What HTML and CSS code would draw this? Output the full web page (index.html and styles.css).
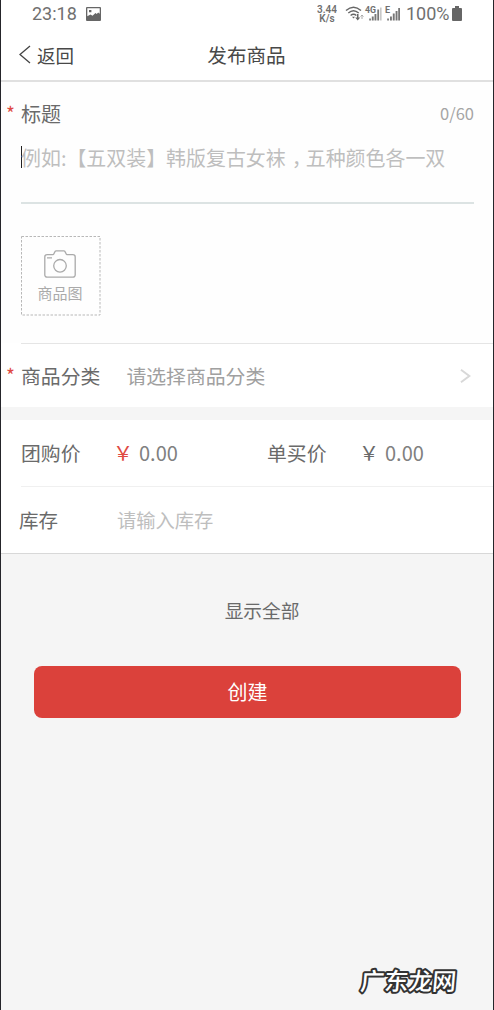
FILE: index.html
```html
<!DOCTYPE html>
<html lang="zh-CN">
<head>
<meta charset="utf-8">
<title>发布商品</title>
<link rel="stylesheet" href="styles.css">
</head>
<body>
<div class="phone">
  <div class="status">
    <span class="clock">23:18</span>
    <svg class="photo" width="15" height="14" viewBox="0 0 15 14"><path fill="#666" fill-rule="evenodd" d="M1 0h13a1 1 0 0 1 1 1v12a1 1 0 0 1-1 1H1a1 1 0 0 1-1-1V1a1 1 0 0 1 1-1zM1.300 1.300v8L4.500 7.500l2 1.200 3-2.700 1.200 1 1.500-1.500 1.500 1.200V1.300zM3 3h2.400v2.300H3z"/></svg>
    <span class="speed"><b>3.44</b><b>K/s</b></span>
    <svg class="wifi" width="20" height="16" viewBox="0 0 20 16" fill="none" stroke="#666" stroke-width="1.400"><path d="M1 4.600Q8.500-2.300 16 4.600M3.300 7.100Q8.500 2.400 13.700 7.100M5.600 9.500Q8.500 7 11.400 9.500"/><path fill="#666" stroke="none" d="M7 10.800h3l-1.500 1.700zM12 8h1.500v3.500h1.700l-2.500 3-2.500-3H12z"/><path stroke="#aaa" stroke-width="1" d="M17 13V9M15.500 10.500L17 9l1.500 1.500"/></svg>
    <svg class="signal" width="17" height="16" viewBox="0 0 17 16"><text class="net" x="-1" y="7" textLength="11" lengthAdjust="spacingAndGlyphs">4G</text><path fill="#777" d="M3.200 12.500h1.700v2H3.200zM5.800 10.500h1.900v4H5.800zM8.500 8h1.900v6.500H8.500zM11.300 3.500h1.800v11h-1.800z"/><path fill="#bbb" d="M14.200 1.500h1.300v13h-1.300z"/></svg>
    <svg class="signal signal-e" width="16" height="16" viewBox="0 0 16 16"><text class="net" x="-1" y="7">E</text><path fill="#777" d="M1.200 12.500h1.700v2H1.200zM4 10.500h1.900v4H4zM6.800 7.500h1.900v7H6.800zM9.600 5h1.900v9.500H9.600zM12.200 2h1.800v12.500h-1.800z"/></svg>
    <span class="percent">100%</span>
    <svg class="battery" width="10" height="16" viewBox="0 0 10 16"><path fill="#666" d="M3 0h4v2h2a1 1 0 0 1 1 1v11a1 1 0 0 1-1 1H1a1 1 0 0 1-1-1V3a1 1 0 0 1 1-1h2z"/></svg>
  </div>
  <header class="nav">
    <div class="back"><svg width="12" height="19" viewBox="0 0 12 19" fill="none" stroke="#444" stroke-width="1.300"><path d="M11 1L1 9.500 11 18"/></svg><span>返回</span></div>
    <h1 class="title">发布商品</h1>
  </header>
  <section class="product">
    <div class="heading"><i class="star">*</i><span class="label">标题</span><span class="count">0/60</span></div>
    <div class="entry"><i class="caret"></i><span>例如:【五双装】韩版复古女袜<span class="comma">，</span>五种颜色各一双</span></div>
    <div class="upload">
      <svg class="frame" width="80" height="80"><rect x=".5" y=".5" width="78.500" height="78.500" fill="none" stroke="#b8b8b8" stroke-dasharray="2.500 1.500"/></svg>
      <svg class="camera" width="32" height="28" viewBox="0 0 32 28" fill="none" stroke="#aaa" stroke-width="1.300"><path d="M3 4.700h6c1.500 0 1.300-3.900 3-3.900h8c1.700 0 1.500 3.900 3 3.900h6a2.200 2.200 0 0 1 2.200 2.200v18a2.200 2.200 0 0 1-2.200 2.200H3a2.200 2.200 0 0 1-2.200-2.200v-18A2.200 2.200 0 0 1 3 4.700zM3 7.800h5"/><circle cx="16" cy="15.800" r="6.300"/></svg>
      <span>商品图</span>
    </div>
  </section>
  <section class="category">
    <i class="star">*</i><span class="label">商品分类</span><span class="choose">请选择商品分类</span>
    <svg width="11" height="14" viewBox="0 0 11 14" fill="none" stroke="#d8d8d8" stroke-width="2"><path d="M1 .8L9.300 7 1 13.200"/></svg>
  </section>
  <section class="prices">
    <div class="price"><span class="label">团购价</span><span class="yen red">￥</span><span class="amount">0.00</span></div>
    <div class="price"><span class="label">单买价</span><span class="yen">￥</span><span class="amount">0.00</span></div>
  </section>
  <section class="stock"><span class="stock-label">库存</span><span class="stock-hint">请输入库存</span></section>
  <div class="show-all">显示全部</div>
  <button class="create">创建</button>
  <svg class="brand" width="106" height="36" viewBox="0 0 106 36"><text x="7" y="26.500" transform="skewX(-5)">广东龙网</text></svg>
</div>
</body>
</html>
```
FILE: styles.css
```css
* { box-sizing: border-box; }
body { margin: 0; }
svg { display: block; flex: none; }
i { font-style: normal; }
.phone {
  width: 494px; height: 1010px; overflow: hidden;
  display: flex; flex-direction: column;
  border: solid #25252a; border-width: 0 1px;
  background: #f5f5f5; color: #6a6a6a;
  font: 20px/30px "Noto Sans CJK SC", sans-serif;
  white-space: nowrap;
}
.status {
  height: 28px; flex: none; display: flex; align-items: center;
  padding-left: 31px; background: #fff;
  font: 18px/28px Roboto, sans-serif; color: #707070;
}
.clock { width: 45px; }
.photo { margin-left: 9px; }
.speed {
  display: flex; flex-direction: column; align-items: center;
  width: 20px; margin-left: 216px; padding-bottom: 1px;
  font-size: 10px; line-height: 9px;
}
.speed b { height: 9px; overflow: hidden; font-weight: 600; }
.wifi { margin-left: 8px; }
.signal { margin: 0 0 0 1px; overflow: visible; }
.signal-e { margin-left: 3px; }
.net { font: 700 9px Roboto, sans-serif; fill: #707070; }
.percent { width: 44px; margin-left: 4px; }
.battery { margin-left: 2px; }
.nav {
  height: 54px; flex: none; display: grid; grid-template-columns: 1fr auto 1fr;
  align-items: center; padding: 1px 1px 0 18px;
  background: #fff; border-bottom: 2px solid #e0e0e0; color: #484848;
}
.back { display: flex; align-items: center; gap: 6px; font-size: 18.500px; }
.title { margin: 0 18px 0 0; font-size: 19.600px; font-weight: 400; }
.product { height: 261px; flex: none; padding: 17px 0 0 20px; background: #fefefe; }
.heading { display: flex; align-items: center; height: 30px; padding-right: 19px; }
.star { width: 14px; margin: -3px 0 0 -14px; color: #df4a43; font-size: 19px; text-indent: -1px; }
.count { margin: -2px 0 0 auto; color: #a5a5a5; font-size: 16.500px; }
.entry {
  display: flex; height: 61px; margin: 14px 19px 0 0;
  border-bottom: 2px solid #dce3e3; color: #bebebe;
}
.entry > span { font-size: 19.950px; }
.caret { width: 1px; height: 22px; margin: 3px -1px 0 0; background: #222; }
.comma { padding-left: 6px; margin-right: -6px; }
.upload {
  position: relative; width: 79px; height: 80px; margin-top: 32px;
  display: flex; flex-direction: column; align-items: center; padding-top: 14px;
  color: #aaa; font-size: 15px; line-height: 22px;
}
.upload span { margin-top: 4px; margin-right: 1px; }
.camera { margin-right: 1px; }
.frame { position: absolute; inset: 0; }
.category {
  height: 64px; flex: none; display: flex; align-items: center;
  margin-bottom: 13px; padding: 2px 22px 0 20px;
  background: linear-gradient(#e5e5e5, #e5e5e5) 20px 0 / 100% 1px no-repeat #fff;
}
.choose { margin-left: 26px; color: #a0a0a0; font-size: 19.850px; }
.category .label, .price .label { font-size: 19.850px; }
.category svg { margin-left: auto; }
.prices {
  height: 67px; flex: none; display: grid; grid-template-columns: 246px 1fr;
  align-items: center; padding: 0 0 2px 20px;
  background: linear-gradient(#f0f0f0, #f0f0f0) 20px 100% / 100% 1px no-repeat #fff;
}
.price { display: flex; align-items: center; }
.price .label { width: 92px; }
.yen { width: 26px; }
.red { color: #df4a43; }
.amount { color: #808080; }
.stock {
  height: 67px; flex: none; display: flex; align-items: center;
  padding-left: 18px; background: #fff; border-bottom: 1px solid #d8d8d8;
}
.stock-label { width: 98px; font-size: 19.500px; }
.stock-hint { font-size: 19.300px; color: #bebebe; }
.show-all { margin: 41px 0 0 30px; text-align: center; font-size: 18.700px; }
.create {
  flex: none; height: 52px; margin: 41px 32px 0 33px; padding: 0; border: 0; border-radius: 8px;
  background: #db413b; color: #fff; font: inherit;
}
.brand { margin: auto 32px 11px auto; overflow: visible; }
.brand text {
  font-size: 24px; font-weight: 500; fill: #fff;
  stroke: #333; stroke-width: 4px; stroke-linejoin: round; paint-order: stroke;
}
```
